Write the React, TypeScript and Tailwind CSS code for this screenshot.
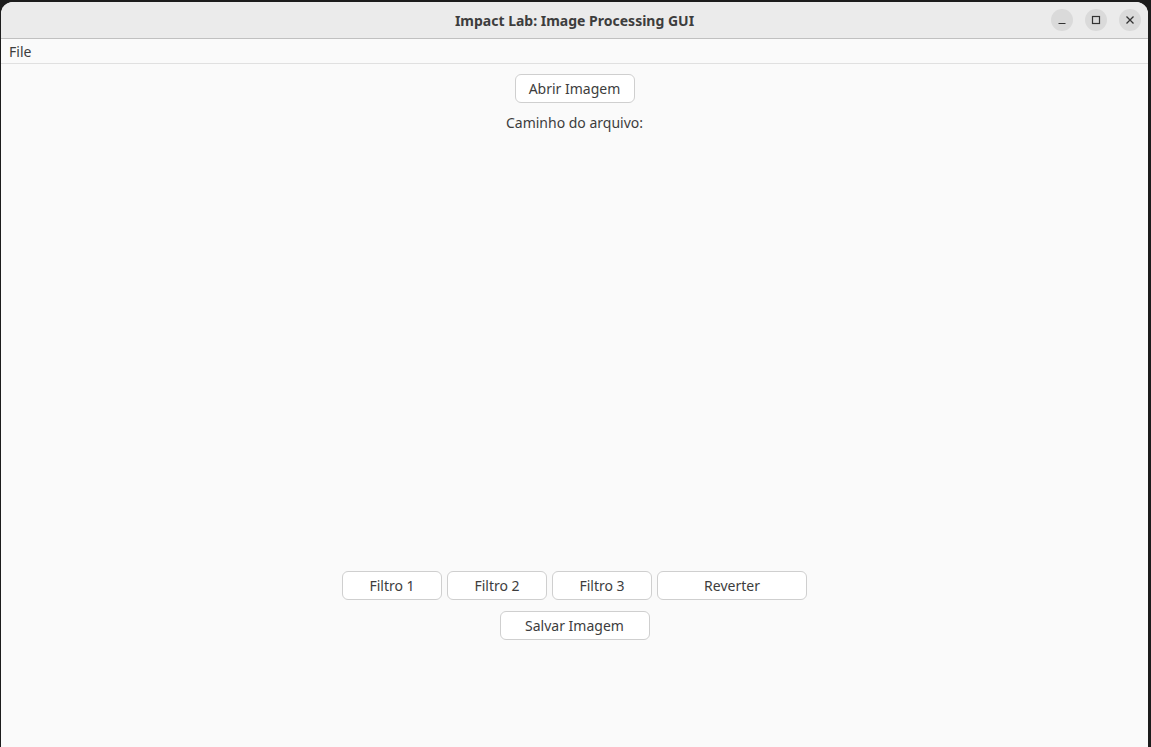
import React from 'react'

const font = { fontFamily: '"Noto Sans", "DejaVu Sans", sans-serif' }

const Btn = ({ label, w }: { label: string; w: string }) => (
  <button
    className={`${w} h-[29px] bg-white border border-[#cfcfcf] rounded-[6px] text-[14px] text-[#3d3d3d] flex items-center justify-center`}
  >
    {label}
  </button>
)

const WinCtl = ({ children }: { children: React.ReactNode }) => (
  <div className="w-[22px] h-[22px] rounded-full bg-[#dadada] flex items-center justify-center">
    {children}
  </div>
)

const App = () => {
  return (
    <div className="w-full h-[747px] bg-[#1c1c1c] pt-[2px] pl-[1px] pr-[3px] overflow-hidden" style={font}>
      <div className="h-full bg-[#fafafa] rounded-t-[12px] flex flex-col overflow-hidden">
        {/* title bar */}
        <div className="relative h-[37px] shrink-0 bg-[#ebebeb] border-b border-[#c0c0c0] flex items-center justify-center">
          <span className="text-[14px] font-bold text-[#3d3d3d]">Impact Lab: Image Processing GUI</span>
          <div className="absolute right-[7px] top-[7px] flex gap-[12px]">
            <WinCtl>
              <svg width="10" height="10" viewBox="0 0 10 10">
                <path d="M1.5 8.5h7" stroke="#333" strokeWidth="1.2" />
              </svg>
            </WinCtl>
            <WinCtl>
              <svg width="10" height="10" viewBox="0 0 10 10">
                <rect x="1.5" y="1.5" width="7" height="7" fill="none" stroke="#333" strokeWidth="1.2" />
              </svg>
            </WinCtl>
            <WinCtl>
              <svg width="10" height="10" viewBox="0 0 10 10">
                <path d="M1.5 1.5l7 7M8.5 1.5l-7 7" stroke="#333" strokeWidth="1.3" />
              </svg>
            </WinCtl>
          </div>
        </div>

        {/* menu bar */}
        <div className="h-[25px] shrink-0 border-b border-[#e0e0e0] flex items-center px-[8px]">
          <span className="text-[14px] text-[#3d3d3d]">File</span>
        </div>

        {/* content */}
        <div className="flex-1 flex flex-col items-center pt-[10px] pb-[107px]">
          <Btn label="Abrir Imagem" w="w-[120px]" />
          <p className="mt-[10px] text-[14px] leading-[20px] text-[#3d3d3d]">Caminho do arquivo:</p>
          <div className="flex-1" />
          <div className="flex gap-[5px]">
            <Btn label="Filtro 1" w="w-[100px]" />
            <Btn label="Filtro 2" w="w-[100px]" />
            <Btn label="Filtro 3" w="w-[100px]" />
            <Btn label="Reverter" w="w-[150px]" />
          </div>
          <div className="mt-[11px]">
            <Btn label="Salvar Imagem" w="w-[150px]" />
          </div>
        </div>
      </div>
    </div>
  )
}

export default App
